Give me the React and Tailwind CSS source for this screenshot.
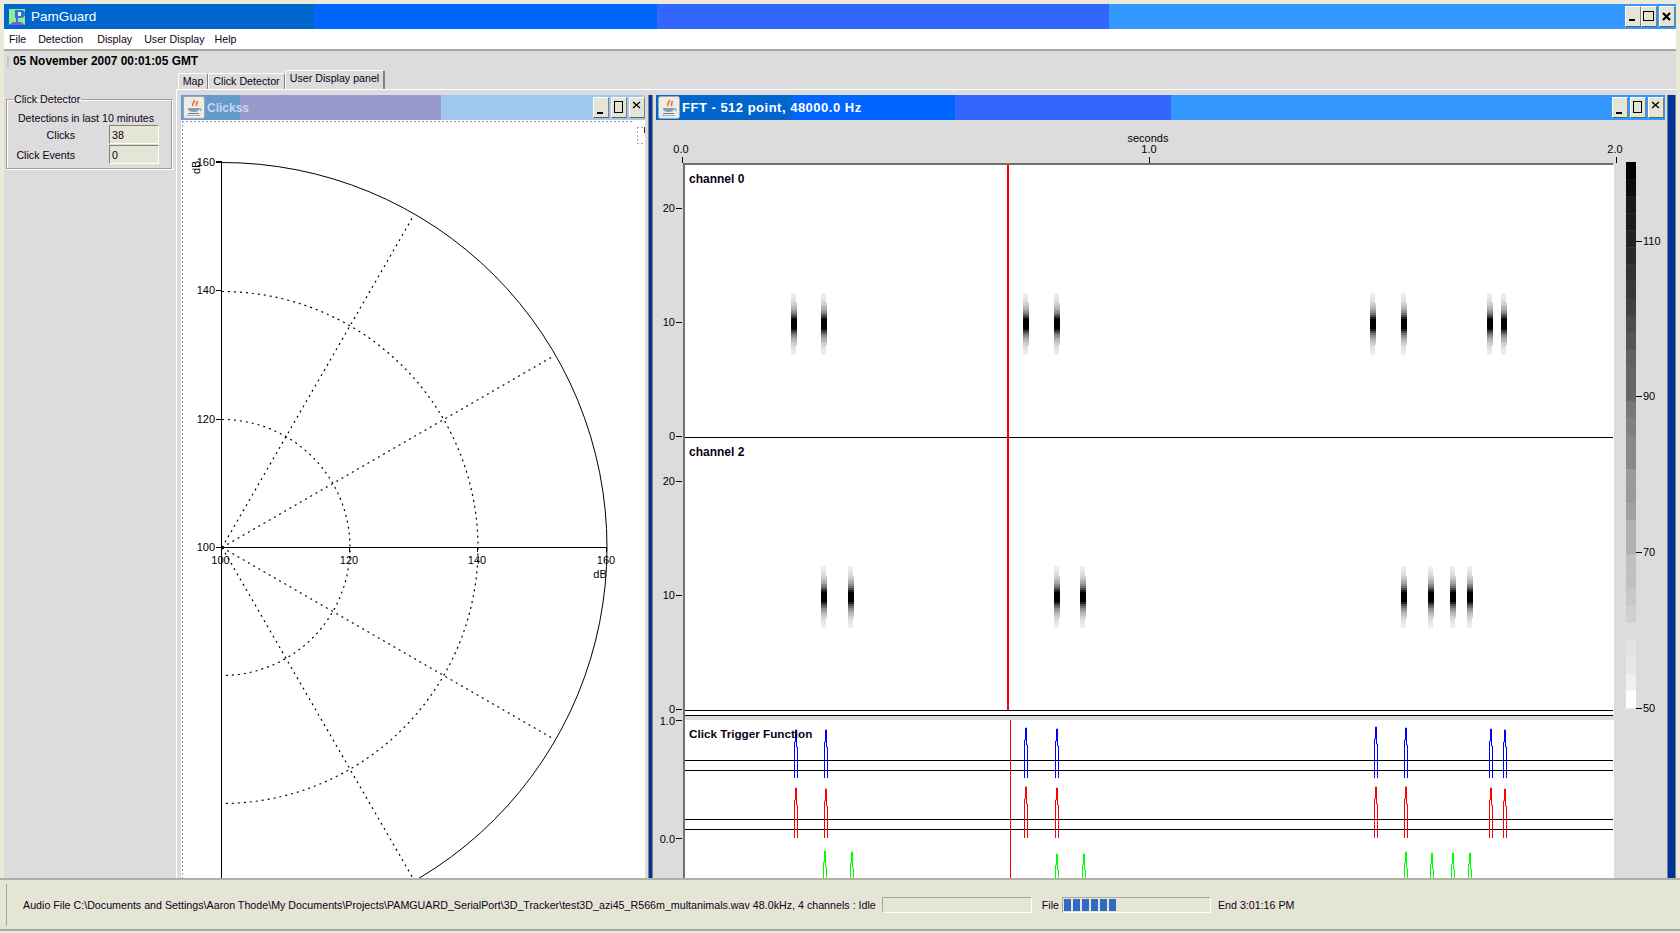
import React from "react";

const FONT = "font-['Liberation_Sans',Arial,sans-serif]";

function WinButton({ kind, big }) {
  return (
    <button className="w-[16px] h-[21px] bg-[#e5e5d5] border border-solid border-t-white border-l-white border-r-[#808078] border-b-[#606058] flex items-center justify-center p-0">
      <svg width="14" height="19" viewBox="0 0 14 19">
        {kind === "min" && <rect x="3" y={big ? 12 : 14} width="6" height="2" fill="#000" />}
        {kind === "max" && (big ? <rect x="1.5" y="4.5" width="10" height="9" fill="none" stroke="#000" strokeWidth="1" /> : <rect x="2.5" y="3.5" width="8" height="11" fill="none" stroke="#000" strokeWidth="1" />)}
        {kind === "close" && <path d={big ? "M3 6l7 7M10 6l-7 7" : "M3 4l7 6M10 4l-7 6"} stroke="#000" strokeWidth={big ? 2.2 : 1.4} fill="none" />}
      </svg>
    </button>
  );
}

function JavaIcon() {
  return (
    <svg width="22" height="23" viewBox="0 0 22 23" className="shrink-0">
      <rect x="0.5" y="0.5" width="21" height="22" rx="2" fill="#ecece4" stroke="#9aa6b8" />
      <path d="M11 4c2 2-3 3-1 6M14 5c1 2-2 3 0 5" stroke="#e8702a" strokeWidth="1.6" fill="none" />
      <path d="M5 12h11v1c0 2-2 3-5 3s-6-1-6-3z" fill="#8a9cb4" />
      <path d="M16 13c2-1 3 1 1 2" stroke="#6a7c94" fill="none" />
      <rect x="5" y="17" width="11" height="1" fill="#6a7c94" />
      <rect x="4" y="19" width="13" height="1" fill="#a0aebf" />
    </svg>
  );
}

function Clicks() {
  const o = { x: 222, y: 547.5 };
  const rs = [128, 256];
  const R = 385;
  const arc = (r) => `M${o.x} ${o.y - r}A${r} ${r} 0 0 1 ${o.x} ${o.y + r}`;
  const rays = [60, 30, -30, -60].map((a) => {
    const t = (a * Math.PI) / 180;
    return { x: o.x + (R - 4) * Math.cos(t), y: o.y - (R - 4) * Math.sin(t) };
  });
  return (
    <svg viewBox="181 120 464 758" className="w-[464px] h-[758px] shrink-0 block bg-white text-[11px]">
      <path d="M182.5 121V878M182 121.5H634" stroke="#999" strokeDasharray="2 2" fill="none" />
      <path d="M637 127.5h6M637.5 127v16M637 143.5h6" stroke="#aaa" strokeDasharray="2 2" fill="none" />
      <rect x="644" y="127" width="1" height="6" fill="#660066" />
      {rs.map((r) => <path key={r} d={arc(r)} fill="none" stroke="#000" strokeWidth="1.2" strokeDasharray="2 4" />)}
      {rays.map((p, i) => <line key={i} x1={o.x} y1={o.y} x2={p.x} y2={p.y} stroke="#000" strokeWidth="1.2" strokeDasharray="2 4" />)}
      <path d={arc(R)} fill="none" stroke="#000" />
      <path d="M221.5 162V878M222 547.5H606M216 162.5H222M216 290.5H222M216 419.5H222M216 547.5H222M349.5 547V552M477.5 547V552M606.5 547V552" stroke="#000" fill="none" />
      <rect x="216" y="161" width="6" height="2" fill="#000" />
      {[["160", 166], ["140", 294], ["120", 423], ["100", 551]].map(([t, y]) => (
        <text key={t} x="215" y={y} textAnchor="end" fill="#000">{t}</text>
      ))}
      <text x="222" y="564" textAnchor="middle" fill="#000">100.</text>
      <text x="349" y="564" textAnchor="middle" fill="#000">120</text>
      <text x="477" y="564" textAnchor="middle" fill="#000">140</text>
      <text x="606" y="564" textAnchor="middle" fill="#000">160</text>
      <text x="600" y="578" textAnchor="middle" fill="#000">dB</text>
      <text transform="translate(200 174) rotate(-90)" fill="#000">dB</text>
    </svg>
  );
}

function Blob({ x, y }) {
  const rows = [];
  for (let d = -30; d <= 30; d += 2) {
    const a = Math.abs(d);
    const g = a < 5 ? 0 : Math.round(255 - 250 * Math.exp(-(a - 5) / 9));
    rows.push(<rect key={d} x={x - 2} y={y + d} width={a < 22 ? 6 : 5} height="2" fill={`rgb(${g},${g},${g})`} />);
  }
  return <g>{rows}</g>;
}

function Pulse({ x, top, base, shoulder, color }) {
  return (
    <path
      d={`M${x - 1.5} ${base}V${shoulder}H${x - 0.5}V${top}H${x + 0.5}V${shoulder + 5}H${x + 1.5}V${base}`}
      fill="none"
      stroke={color}
    />
  );
}

const BAR = ["#000","#0c0c0c","#181818","#1c1c1c","#222","#2a2a2a","#333","#383838","#404040","#4c4c4c","#555","#606060","#666","#666","#777","#808080","#888","#888","#999","#999","#a0a0a8","#b0b0b0","#b0b0b0","#c0c0c0","#c0c0c0","#c8c8c8","#d0d0d0","#dcdcdc","#e4e4e4","#e8e8e8","#f0f0f0","#fff"];

function FFT() {
  const ch0 = [793, 823, 1025, 1056, 1372, 1403, 1489, 1503];
  const ch2 = [823, 850, 1056, 1082, 1403, 1430, 1452, 1469];
  const blue = [[796,730],[826,730],[1026,728],[1057,729],[1376,727],[1406,728],[1491,729],[1505,730]];
  const red = [[796,788],[826,789],[1026,787],[1057,788],[1376,787],[1406,787],[1491,788],[1505,789]];
  const green = [[825,851],[852,852],[1057,854],[1084,854],[1406,852],[1432,853],[1453,853],[1470,853]];
  return (
    <svg viewBox="656 120 1009 758" className="w-[1009px] h-[758px] shrink-0 block text-[11px]">
      <rect x="656" y="120" width="1009" height="758" fill="#dcdcdc" />
      <rect x="685" y="165" width="929" height="545" fill="#fff" />
      <rect x="685" y="710" width="929" height="5" fill="#fff" />
      <rect x="685" y="715" width="929" height="5" fill="#dcdcdc" />
      <rect x="685" y="720" width="929" height="158" fill="#fff" />
      <path d="M684 878V164H1613" stroke="#707070" strokeWidth="2" fill="none" />
      <path d="M682.5 157V163M1149.5 157V163M1616.5 157V163" stroke="#000" />
      <text x="681" y="153" textAnchor="middle" fill="#000">0.0</text>
      <text x="1149" y="153" textAnchor="middle" fill="#000">1.0</text>
      <text x="1615" y="153" textAnchor="middle" fill="#000">2.0</text>
      <text x="1148" y="142" textAnchor="middle" fill="#000">seconds</text>
      {[["20",208,4],["10",322,4],["0",436,4],["20",481,4],["10",595,4],["0",709,4],["1.0",720,5],["0.0",838,5]].map(([t,y,o],i)=>(
        <g key={i}>
          <path d={`M676 ${y+0.5}H682`} stroke="#000" />
          <text x="675" y={y+o} textAnchor="end" fill="#000">{t}</text>
        </g>
      ))}
      {ch0.map((x) => <Blob key={x} x={x} y={323} />)}
      {ch2.map((x) => <Blob key={x} x={x} y={596} />)}
      <path d="M685 437.5H1613M685 710.5H1613M685 715.5H1613M685 760.5H1613M685 770.5H1613M685 819.5H1613M685 829.5H1613" stroke="#000" />
      <rect x="1007" y="165" width="2" height="545" fill="#ff0000" />
      <rect x="1010" y="720" width="1" height="158" fill="#ff0000" />
      {blue.map(([x,t]) => <Pulse key={x} x={x} top={t} base={778} shoulder={t+12} color="#0000ff" />)}
      {red.map(([x,t]) => <Pulse key={x} x={x} top={t} base={838} shoulder={t+12} color="#ff0000" />)}
      {green.map(([x,t]) => <Pulse key={x} x={x} top={t} base={878} shoulder={t+11} color="#00ff00" />)}
      <text x="689" y="183" fontWeight="700" fontSize="12" fill="#100018">channel 0</text>
      <text x="689" y="456" fontWeight="700" fontSize="12" fill="#100018">channel 2</text>
      <text x="689" y="738" fontWeight="700" fontSize="11.7" fill="#100018">Click Trigger Function</text>
      {BAR.map((c, i) => <rect key={i} x="1626" y={162 + i * 17.06} width="10" height="17.5" fill={c} />)}
      {[["110",241],["90",396],["70",552],["50",708]].map(([t,y]) => (
        <g key={t}>
          <path d={`M1636 ${y+0.5}H1642`} stroke="#000" />
          <text x="1643" y={y+4} fill="#000">{t}</text>
        </g>
      ))}
    </svg>
  );
}

function FrameTitle({ cls, text, textCls, buttons }) {
  return (
    <div className={`h-[25px] shrink-0 flex items-center pl-[2px] ${cls}`}>
      <JavaIcon />
      <span className={`ml-[2px] ${textCls}`}>{text}</span>
      <div className={`ml-auto flex ${buttons}`}>
        <WinButton kind="min" />
        <WinButton kind="max" />
        <WinButton kind="close" />
      </div>
    </div>
  );
}

export default function App() {
  return (
    <div className={`${FONT} w-[1680px] h-[933px] overflow-hidden bg-[#ece9d8] p-[4px] pb-[2px] flex flex-col text-[10.67px] text-[#100018] leading-none`}>
      <div className="h-[25px] shrink-0 flex items-center pl-[5px] pr-[1px] bg-[linear-gradient(to_right,#0066cc_310px,#0066ff_310px,#0066ff_653px,#3366ff_653px,#3366ff_1105px,#3399ff_1105px)]">
        <svg width="16" height="16" viewBox="0 0 16 16" className="shrink-0">
          <rect width="16" height="16" fill="#90ee90" />
          <path d="M6 1h6a3 3 0 0 1 0 8H9v5H7V9H6z" fill="#3a6fd8" />
          <rect x="9" y="3" width="3" height="4" fill="#d8f0ff" />
          <path d="M0 16l4-3h8l4 3z" fill="#7a5fd0" />
        </svg>
        <span className="ml-[6px] text-[13.5px] text-white">PamGuard</span>
        <div className="ml-auto flex">
          <WinButton kind="min" big />
          <WinButton kind="max" big />
          <span className="w-[2px]" />
          <WinButton kind="close" big />
        </div>
      </div>
      <nav className="h-[20px] shrink-0 bg-white flex items-center gap-[12px] pl-[5px]">
        <span>File</span><span>Detection</span><span className="ml-[2px]">Display</span><span>User Display</span><span className="-ml-[2px]">Help</span>
      </nav>
      <div className="h-[2px] shrink-0 bg-[#a8a898]" />
      <div className="flex-1 min-h-0 bg-[#dcdcdc] flex flex-col">
        <div className="h-[20px] shrink-0 flex items-center pl-[3px] pt-[1px] gap-[4px]">
          <span className="w-[2px] h-[11px] bg-[#c8c8b8]" />
          <b className="text-[11.9px] text-[#000]">05 November 2007 00:01:05 GMT</b>
        </div>
        <div className="flex-1 min-h-0 flex">
          <aside className="w-[172px] shrink-0 pl-[2px] pt-[23px]">
            <fieldset className="w-[166px] h-[75px] border border-[#a0a090] shadow-[inset_1px_1px_0_#fff,1px_1px_0_#fff]">
              <legend className="ml-[6px] px-[1px]">Click Detector</legend>
              <p className="text-center mt-[8px] pr-[6px]">Detections in last 10 minutes</p>
              <div className="grid grid-cols-[102px_50px] mt-[2px] items-center">
                <span className="text-right pr-[34px]">Clicks</span>
                <span className="h-[19px] bg-[#e5e5d5] border border-solid border-t-[#808078] border-l-[#808078] border-r-white border-b-white pl-[2px] flex items-center">38</span>
                <span className="text-right pr-[34px] mt-[1px]">Click Events</span>
                <span className="h-[19px] mt-[1px] bg-[#e5e5d5] border border-solid border-t-[#808078] border-l-[#808078] border-r-white border-b-white pl-[2px] flex items-center">0</span>
              </div>
            </fieldset>
          </aside>
          <section className="flex-1 min-w-0 flex flex-col">
            <div className="h-[18px] shrink-0 flex items-end pl-[2px]">
              <span className="w-[30px] h-[16px] bg-[#dcdcdc] border-l border-t border-white border-r border-r-[#808078] flex items-center justify-center rounded-t-[2px]">Map</span>
              <span className="w-[77px] h-[16px] bg-[#dcdcdc] border-l border-t border-white border-r border-r-[#808078] flex items-center justify-center rounded-t-[2px]">Click Detector</span>
              <span className="w-[100px] h-[19px] pb-[3px] bg-[#dcdcdc] border-l border-t border-white border-r-2 border-r-[#808078] flex items-center justify-center rounded-t-[2px]">User Display panel</span>
            </div>
            <div className="flex-1 min-h-0 flex border-t border-l border-white pt-[5px] pl-[4px]">
              <div className="w-[464px] shrink-0 flex flex-col">
                <FrameTitle cls="bg-[linear-gradient(to_right,#6699cc_59px,#9999cc_59px,#9999cc_260px,#a0c8f0_260px)]" text="Clickss" textCls="text-[12px] font-bold text-[#c8d8f0]" buttons="gap-[2px]" />
                <Clicks />
              </div>
              <div className="w-[11px] shrink-0 flex">
                <span className="w-[4px] bg-[#dcdcdc] border-r border-[#808078]" />
                <span className="w-[3px] bg-[#003399]" />
                <span className="w-[4px] bg-[#dcdcdc] border-l border-[#808078]" />
              </div>
              <div className="w-[1009px] shrink-0 flex flex-col">
                <FrameTitle cls="bg-[linear-gradient(to_right,#0066cc_136px,#0066ff_136px,#0066ff_299px,#3366ff_299px,#3366ff_515px,#3399ff_515px)]" text="FFT - 512 point, 48000.0 Hz" textCls="text-[13px] text-white font-bold tracking-[0.5px]" buttons="gap-[2px] pr-[1px]" />
                <FFT />
              </div>
              <div className="flex pl-[2px]">
                <span className="w-[1px] bg-[#808078]" />
                <span className="w-[7px] bg-[#003399]" />
                <span className="w-[1px] bg-[#808078]" />
              </div>
            </div>
          </section>
        </div>
      </div>
      <footer className="h-[53px] shrink-0 -mx-[4px] px-[6px] bg-[#e5e5d5] border-t-2 border-b-2 border-t-[#b0b0a8] border-b-[#a8a8a0] flex items-center">
        <span className="w-[2px] h-[42px] bg-[#e5e5d5] border-l border-[#a8a898]" />
        <span className="ml-[15px] mt-[2px] text-[10.7px] whitespace-nowrap">Audio File C:\Documents and Settings\Aaron Thode\My Documents\Projects\PAMGUARD_SerialPort\3D_Tracker\test3D_azi45_R566m_multanimals.wav 48.0kHz, 4 channels : Idle</span>
        <span className="ml-[6px] w-[150px] h-[16px] border border-solid border-t-[#a8a898] border-l-[#a8a898] border-r-white border-b-white" />
        <span className="ml-[10px] mt-[2px]">File</span>
        <span className="ml-[3px] w-[149px] h-[16px] border border-solid border-t-[#a8a898] border-l-[#a8a898] border-r-white border-b-white flex gap-[2px] p-[1px]">
          <i className="w-[7px] bg-[#316ac5]" /><i className="w-[7px] bg-[#316ac5]" /><i className="w-[7px] bg-[#316ac5]" /><i className="w-[7px] bg-[#316ac5]" /><i className="w-[7px] bg-[#316ac5]" /><i className="w-[7px] bg-[#316ac5]" />
        </span>
        <span className="ml-[7px] mt-[2px]">End 3:01:16 PM</span>
      </footer>
    </div>
  );
}
